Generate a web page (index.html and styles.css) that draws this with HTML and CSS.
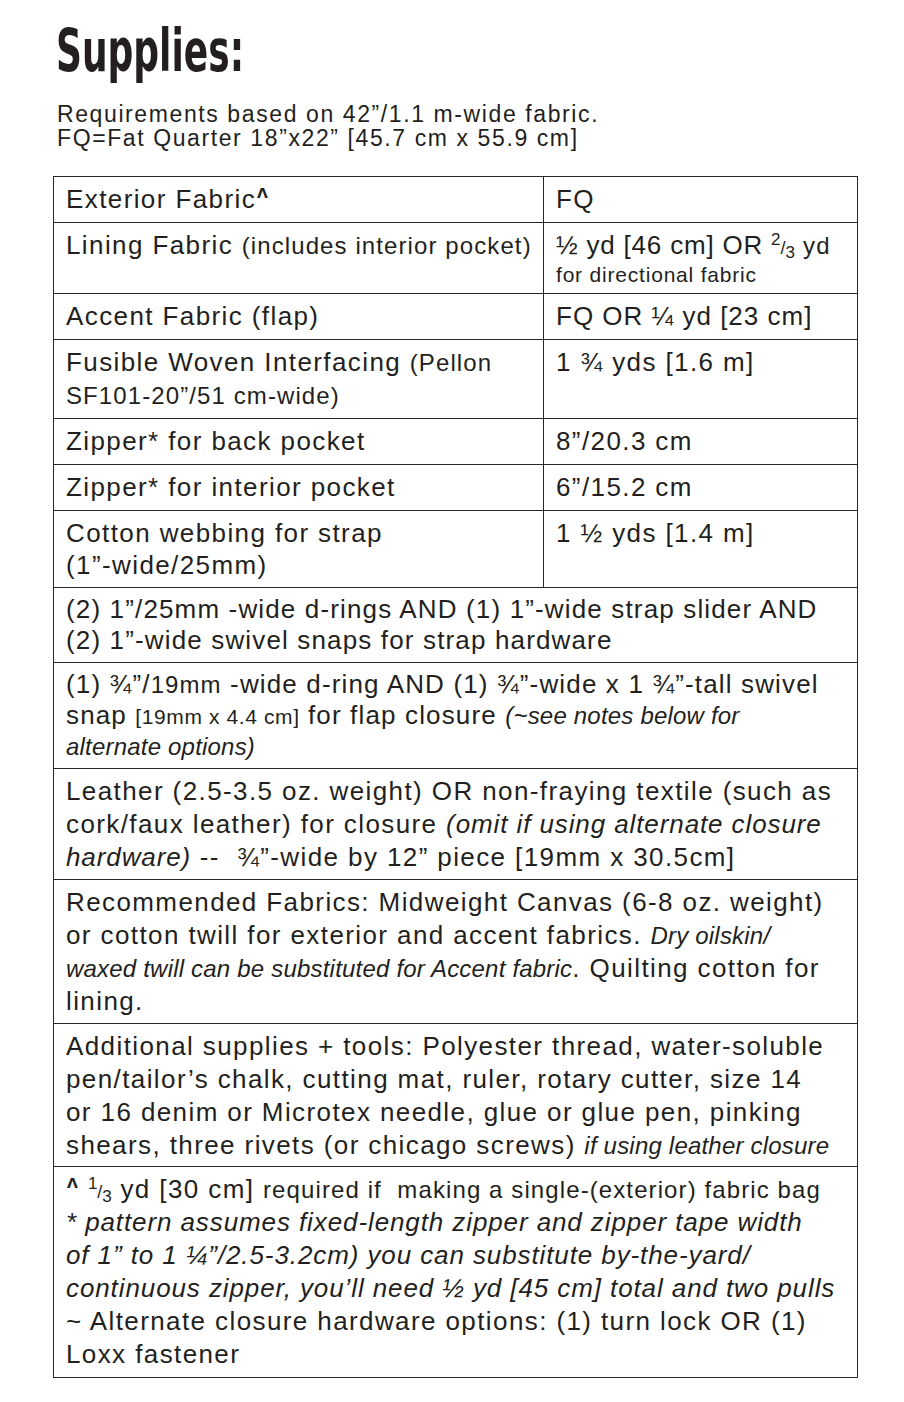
FILE: index.html
```html
<!DOCTYPE html>
<html>
<head>
<meta charset="utf-8">
<link rel="stylesheet" href="styles.css">
</head>
<body>
<div class="page">
  <h1 class="title">Supplies:</h1>
  <p class="intro">Requirements based on 42”/1.1 m-wide fabric.<br>FQ=Fat Quarter 18”x22” [45.7 cm x 55.9 cm]</p>
  <table class="supplies">
    <colgroup><col class="c1"><col class="c2"></colgroup>
    <tr class="r1">
      <td>Exterior Fabric<span class="caret">Λ</span></td>
      <td>FQ</td>
    </tr>
    <tr class="r2">
      <td>Lining Fabric <span class="sm">(includes interior pocket)</span></td>
      <td><span class="l1">½ yd [46 cm] OR <span class="frac"><sup>2</sup>/<sub>3</sub></span> <span class="sm">yd</span></span><span class="l2">for directional fabric</span></td>
    </tr>
    <tr class="r1">
      <td>Accent Fabric (flap)</td>
      <td class="tight">FQ OR ¼ yd [23 cm]</td>
    </tr>
    <tr class="r3">
      <td>Fusible Woven Interfacing <span class="sm">(Pellon<br>SF101-20”/51 cm-wide)</span></td>
      <td>1 ¾ yds [1.6 m]</td>
    </tr>
    <tr class="r1">
      <td>Zipper* for back pocket</td>
      <td>8”/20.3 cm</td>
    </tr>
    <tr class="r1">
      <td>Zipper* for interior pocket</td>
      <td>6”/15.2 cm</td>
    </tr>
    <tr class="r3 r3b">
      <td>Cotton webbing for strap<br>(1”-wide/25mm)</td>
      <td>1 ½ yds [1.4 m]</td>
    </tr>
    <tr class="r4">
      <td colspan="2">(2) 1”/25mm -wide d-rings AND (1) 1”-wide strap slider AND<br>(2) 1”-wide swivel snaps for strap hardware</td>
    </tr>
    <tr class="r4">
      <td colspan="2">(1) ¾”/<span class="sm">19mm</span> -wide d-ring AND (1) ¾”-wide x 1 ¾”-tall swivel<br>snap <span class="xs">[19mm x 4.4 cm]</span> for flap closure <em>(~see notes below for<br>alternate options)</em></td>
    </tr>
    <tr class="r5">
      <td colspan="2">Leather (2.5-3.5 oz. weight) OR non-fraying textile (such as<br>cork/faux leather) for closure <em class="big">(omit if using alternate closure<br>hardware)</em> --&nbsp; ¾”-wide by 12” piece [19mm x 30.5cm]</td>
    </tr>
    <tr class="r5">
      <td colspan="2">Recommended Fabrics: Midweight Canvas (6-8 oz. weight)<br>or cotton twill for exterior and accent fabrics. <em>Dry oilskin/<br>waxed twill can be substituted for Accent fabric</em>. Quilting cotton for<br>lining.</td>
    </tr>
    <tr class="r5 r5b">
      <td colspan="2">Additional supplies + tools: Polyester thread, water-soluble<br>pen/tailor’s chalk, cutting mat, ruler, rotary cutter, size 14<br>or 16 denim or Microtex needle, glue or glue pen, pinking<br>shears, three rivets (or chicago screws) <em>if using leather closure</em></td>
    </tr>
    <tr class="r6">
      <td colspan="2"><span class="caret">Λ</span> <span class="frac"><sup>1</sup>/<sub>3</sub></span> yd [30 cm] <span class="sm">required if&nbsp; making a single-(exterior) fabric bag</span><br><em class="big">* pattern assumes fixed-length zipper and zipper tape width<br>of 1” to 1 ¼”/2.5-3.2cm) you can substitute by-the-yard/<br>continuous zipper, you’ll need ½ yd [45 cm] total and two pulls</em><br>~ Alternate closure hardware options: (1) turn lock OR (1)<br>Loxx fastener</td>
    </tr>
  </table>
</div>
</body>
</html>
```

FILE: styles.css
```css
html, body {
  margin: 0;
  padding: 0;
  background: #ffffff;
}

.page {
  padding: 17px 47px 0 53px;
  color: #231f20;
  font-family: "Liberation Sans", Arial, sans-serif;
}

.title {
  margin: 0 0 0 3px;
  font-family: "DejaVu Sans Condensed", "DejaVu Sans", sans-serif;
  font-weight: bold;
  font-size: 58px;
  line-height: 68px;
  letter-spacing: 0;
  transform: scaleX(0.69);
  transform-origin: left center;
  color: #231f20;
}

.intro {
  margin: 17px 0 0 4px;
  font-size: 23px;
  line-height: 24px;
  letter-spacing: 1.6px;
}

.supplies {
  margin-top: 26px;
  border-collapse: collapse;
  width: 804px;
  table-layout: fixed;
  font-size: 26px;
  letter-spacing: 1.4px;
}

.c1 { width: 490px; }
.c2 { width: 314px; }

.supplies td {
  border: 1.5px solid #2a2627;
  padding: 6px 12px 6px 12px;
  vertical-align: top;
  line-height: 33px;
  white-space: nowrap;
}

.r1 td { height: 33px; }

.supplies td.tight { letter-spacing: 1px; }

.l1 {
  display: block;
  line-height: 33px;
  letter-spacing: 0.8px;
}
.l2 {
  display: block;
  line-height: 25px;
  font-size: 21px;
  letter-spacing: 0.8px;
}

.r3b td { line-height: 32px; }

.r4 td {
  line-height: 31px;
  letter-spacing: 1.15px;
}

.r5 td { padding-bottom: 5px; }
.r5b td { padding-bottom: 4px; }
.r6 td { padding-bottom: 6px; }

.sm {
  font-size: 24px;
  letter-spacing: 1.1px;
  line-height: 1;
}
.xs {
  font-size: 21px;
  letter-spacing: 0.6px;
  line-height: 1;
}

em {
  font-size: 24px;
  letter-spacing: 0.2px;
  line-height: 1;
}
em.big {
  font-size: 26px;
  letter-spacing: 0.9px;
}

.caret {
  font-family: "DejaVu Sans", sans-serif;
  font-weight: bold;
  font-size: 14px;
  line-height: 0;
  vertical-align: 10px;
  margin-left: 1px;
}

.frac {
  font-size: 18px;
  letter-spacing: 0;
  line-height: 0;
}
.frac sup {
  font-size: 17px;
  line-height: 0;
  vertical-align: 9px;
}
.frac sub {
  font-size: 17px;
  line-height: 0;
  vertical-align: -4px;
}
```
